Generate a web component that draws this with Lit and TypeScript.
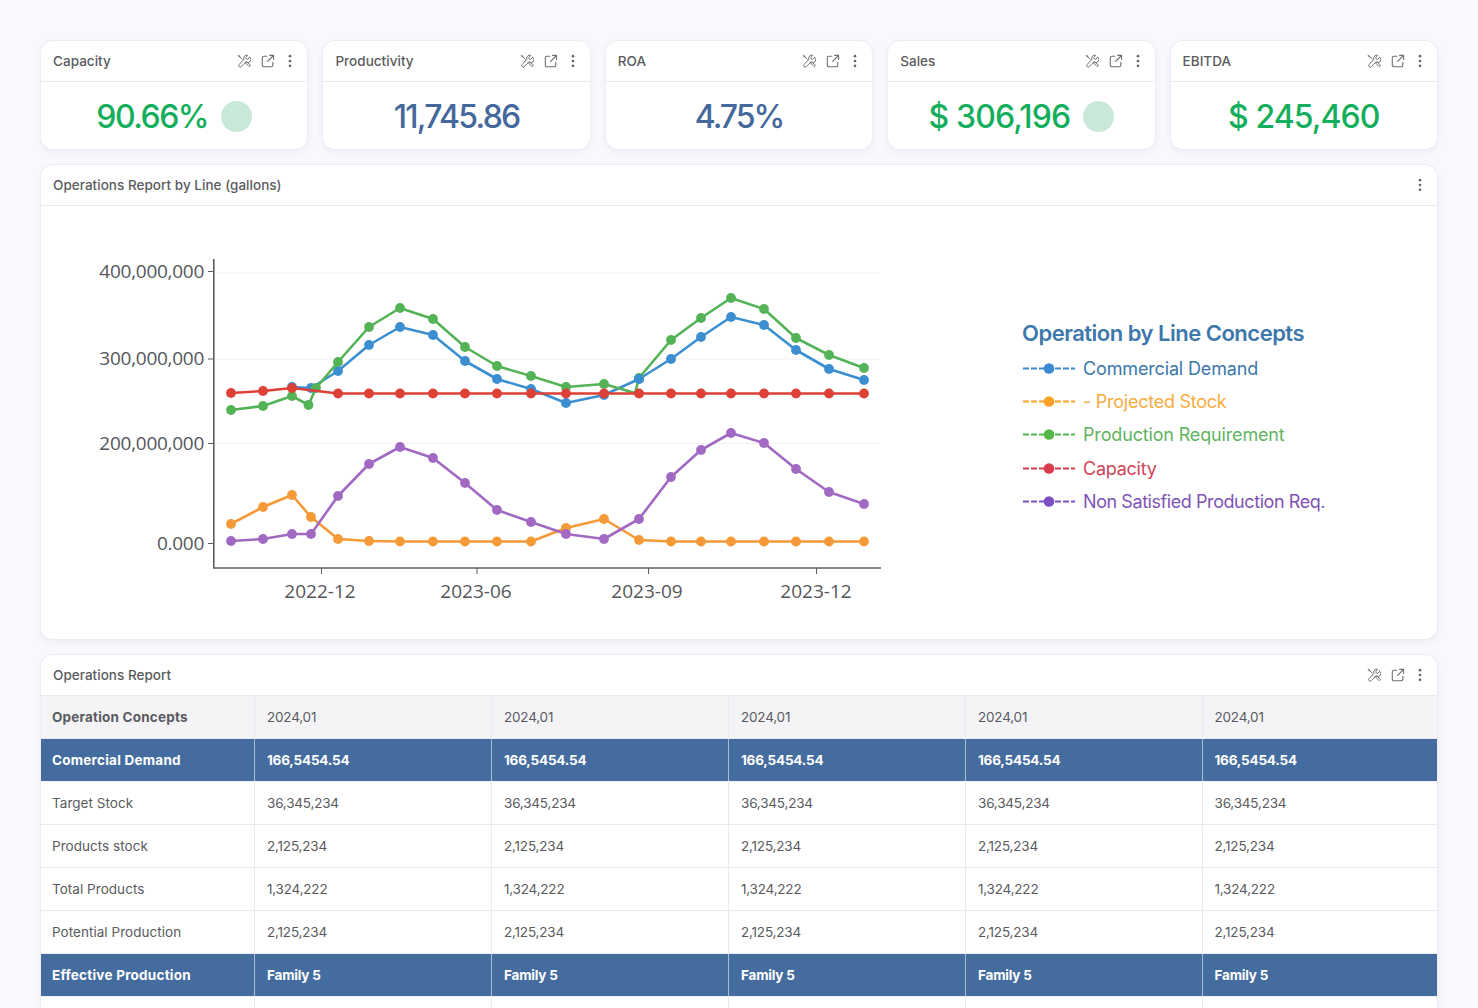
import { LitElement, html, css, svg } from "lit";
import { customElement } from "lit/decorators.js";

const wrench = html`<svg class="ic" viewBox="0 0 14 14" fill="none" stroke="currentColor" stroke-width="1" stroke-linejoin="round" stroke-linecap="round"><path d="M12.7 3.3l-2 2-1.5-.4-.4-1.5 2-2a3 3 0 0 0-3.9 3.9L2 10.7a1.5 1.5 0 0 0 2.1 2.1l4.8-4.8a3 3 0 0 0 3.8-4.7z"/><path d="M5.3 5.2 2.9 2.8 2.5 1.7 1.6 1.2l-.4.4.5.9 1.1.4"/><path d="m8.3 8.7 3.4 3.5a.9.9 0 0 0 1.3-1.3L9.7 7.5"/></svg>`;
const ext = html`<svg class="ic" viewBox="0 0 14 14" fill="none" stroke="currentColor" stroke-width="1.1" stroke-linecap="round" stroke-linejoin="round"><path d="M11.8 8.2v3a1.5 1.5 0 0 1-1.5 1.5H2.8a1.5 1.5 0 0 1-1.5-1.5V3.7a1.5 1.5 0 0 1 1.5-1.5h3"/><path d="M8.6 1.4h4v4M12.5 1.5 6.6 7.4"/></svg>`;
const dots = html`<svg class="ic more" viewBox="0 0 14 14" fill="#66676c"><circle cx="7" cy="2.2" r="1.35"/><circle cx="7" cy="7" r="1.35"/><circle cx="7" cy="11.8" r="1.35"/></svg>`;

const kpis = [
  { t: "Capacity", v: "90.66%", c: "g", dot: true, ls: -1.5 },
  { t: "Productivity", v: "11,745.86", c: "b", dot: false, ls: -1.72 },
  { t: "ROA", v: "4.75%", c: "b", dot: false, ls: -2 },
  { t: "Sales", v: "$ 306,196", c: "g", dot: true, ls: -0.85 },
  { t: "EBITDA", v: "$ 245,460", c: "g", dot: false, ls: -0.95 },
];

const XS = [231, 263, 292, 311, 338, 369, 400, 433, 465, 497, 531, 566, 604, 639, 671, 701, 731, 764, 796, 829, 864];
const zip = (ys: number[], from = 0) => ys.map((y, i) => [XS[i + from], y] as [number, number]);

const blue = "#3b8fd0";
const series: { c: string; pts: [number, number][]; hide?: number }[] = [
  { c: blue, pts: zip([387, 388, 371, 345, 327, 335, 361, 379, 389, 403, 395, 379, 359, 337, 317, 325, 350, 369, 380], 2) },
  {
    c: "#54b257",
    hide: 635,
    pts: [[231, 410], [263, 406], [292, 396], [308.5, 405], [316, 388], [338, 362], [369, 327], [400, 308], [433, 319], [465, 347], [497, 366], [531, 376], [566, 387], [604, 384], [635, 393], [639, 378], [671, 340], [701, 318], [731, 298], [764, 309], [796, 338], [829, 355], [864, 368]],
  },
  { c: blue, pts: [[639, 379]] },
  { c: "#f59a36", pts: zip([524, 507, 495, 517, 539, 541, 541.5, 541.5, 541.5, 541.5, 541.5, 528, 519, 540, 541.5, 541.5, 541.5, 541.5, 541.5, 541.5, 541.5]) },
  { c: "#a169c2", pts: zip([541, 539, 534, 534, 496, 464, 447, 458, 483, 510, 522, 534, 539, 519, 477, 450, 433, 443, 469, 492, 504]) },
  {
    c: "#dc4037",
    pts: [[231, 393], [263, 391], [292, 388], ...XS.slice(4).map((x) => [x, 393.5] as [number, number])],
  },
];

const legend = [
  ["#3a8ad4", "#3a78ad", "Commercial Demand", -0.15],
  ["#ffa126", "#f8ac3f", "- Projected Stock", -0.25],
  ["#53b848", "#5fb35f", "Production Requirement", -0.16],
  ["#d83c4e", "#cf4558", "Capacity", -0.25],
  ["#7e4fc4", "#7f52b5", "Non Satisfied Production Req.", -0.43],
] as const;

const cols = ["a", "b", "c", "d", "e"];
type Row = { l: string; v: string; k?: boolean };
const rows: Row[] = [
  { l: "Comercial Demand", v: "166,5454.54", k: true },
  { l: "Target Stock", v: "36,345,234" },
  { l: "Products stock", v: "2,125,234" },
  { l: "Total Products", v: "1,324,222" },
  { l: "Potential Production", v: "2,125,234" },
  { l: "Effective Production", v: "Family 5", k: true },
  { l: "", v: "" },
];

@customElement("chart-plot")
class ChartPlot extends LitElement {
  static styles = css`
    :host { display: block; }
    svg { display: block; }
    .t { font-family: "Open Sans", sans-serif; font-size: 19px; fill: #55565b; }
    .y { letter-spacing: -.27px; }
  `;
  render() {
    const ylabels: [string, number][] = [["400,000,000", 278], ["300,000,000", 365], ["200,000,000", 450], ["0.000", 550]];
    const xlabels: [string, number][] = [["2022-12", 320], ["2023-06", 476], ["2023-09", 647], ["2023-12", 816]];
    return html`<svg width="1396" height="433" viewBox="41 206 1396 433">
      ${[273, 359, 443.5].map((y) => svg`<line x1="214" x2="880" y1=${y} y2=${y} stroke="#f0f0f3" stroke-width="1"/>`)}
      ${[271.5, 359, 443.5, 543.5].map((y) => svg`<line x1="208" x2="214" y1=${y} y2=${y} stroke="#5d5e63" stroke-width="1"/>`)}
      ${[321.5, 477, 648.5, 816.5].map((x) => svg`<line x1=${x} x2=${x} y1="568" y2="574" stroke="#5d5e63" stroke-width="1"/>`)}
      <path d="M213.8 259V568H881" fill="none" stroke="#5d5e63" stroke-width="1.6"/>
      ${ylabels.map(([t, y]) => svg`<text class="t y" x="204" y=${y} text-anchor="end">${t}</text>`)}
      ${xlabels.map(([t, x]) => svg`<text class="t" x=${x} y="598" text-anchor="middle">${t}</text>`)}
      ${series.map((s) => svg`
        <polyline points=${s.pts.map((p) => p.join(",")).join(" ")} fill="none" stroke=${s.c} stroke-width="2.6" stroke-linejoin="round"/>
        ${s.pts.filter((p) => p[0] !== s.hide).map((p) => svg`<circle cx=${p[0]} cy=${p[1]} r="4.9" fill=${s.c}/>`)}
      `)}
    </svg>`;
  }
}

@customElement("app-root")
class AppRoot extends LitElement {
  static styles = css`
    :host { display: block; height: 1008px; overflow: hidden; background: #f8f8fd; font-family: "Inter", "Liberation Sans", sans-serif; color: #5a5b60; }
    .page { padding: 41px 41px 0; display: flex; flex-direction: column; gap: 16px; }
    .kpis { display: grid; grid-template-columns: repeat(5, 1fr); gap: 16px; }
    .card { background: #fff; border-radius: 12px; box-shadow: 0 0 0 1px #ededf3, 0 3px 8px rgba(40, 40, 90, .06); overflow: hidden; }
    .head { height: 40px; display: flex; align-items: center; padding: 0 10px 0 12px; border-bottom: 1px solid #e9e9ee; font-size: 13.5px; font-weight: 500; letter-spacing: .03px; }
    .head .title { flex: 1; }
    .icons { display: flex; align-items: center; gap: 10px; color: #6f7075; }
    .ic { width: 14px; height: 14px; display: block; }
    .more { margin-left: -2px; }
    .kval { height: 65px; padding-top: 2px; display: flex; align-items: center; justify-content: center; gap: 13px; font-size: 32px; font-weight: 500; }
    .g { color: #14ae5c; }
    .b { color: #44689c; }
    .dot { width: 31px; height: 31px; border-radius: 50%; background: #c8e9d8; }
    .chart { position: relative; height: 433px; }
    .legend { position: absolute; left: 981px; top: 114px; }
    .ltitle { font-size: 22px; font-weight: 600; color: #3d78ab; letter-spacing: -.5px; line-height: 26px; margin-bottom: 6px; }
    .li { display: flex; align-items: center; gap: 7px; height: 33.2px; font-size: 18px; }
    .li svg { width: 54px; height: 11px; display: block; flex: none; }
    table { width: 100%; border-collapse: collapse; table-layout: fixed; font-size: 13.5px; }
    col.first { width: 213.5px; }
    col.wide { width: 237px; }
    col.mid { width: 236.5px; }
    td, th { height: 43px; padding: 0 12px; text-align: left; box-sizing: border-box; border: 1px solid #e9e9f0; font-weight: 400; letter-spacing: -.2px; }
    th { height: 42px; }
    tr > :first-child { border-left: none; padding-left: 11px; letter-spacing: .04px; }
    tr > :last-child { border-right: none; }
    tr:first-child > * { border-top: none; }
    thead th { background: #f4f4f7; }
    thead th.first { font-weight: 700; letter-spacing: .2px; }
    tr.k td { background: #456c9e; color: #fff; font-weight: 700; border-top-color: #f0f2f8; border-bottom-color: #f0f2f8; border-left-color: #a9bcd3; border-right-color: #a9bcd3; }
    tr.k td:first-child { letter-spacing: .24px; }
  `;

  head(title: string, tools = true) {
    return html`<div class="head"><span class="title">${title}</span><span class="icons">${tools ? html`${wrench}${ext}` : ""}${dots}</span></div>`;
  }

  render() {
    return html`<div class="page">
      <div class="kpis">
        ${kpis.map((k) => html`<div class="card">${this.head(k.t)}<div class="kval ${k.c}"><span style="letter-spacing:${k.ls}px">${k.v}</span>${k.dot ? html`<span class="dot"></span>` : ""}</div></div>`)}
      </div>
      <div class="card">
        ${this.head("Operations Report by Line (gallons)", false)}
        <div class="chart">
          <chart-plot></chart-plot>
          <div class="legend">
            <div class="ltitle">Operation by Line Concepts</div>
            ${legend.map(([mc, tc, t, ls]) => html`<div class="li" style="color:${tc};letter-spacing:${ls}px">
              <svg viewBox="0 0 54 11"><line x1="1" x2="53" y1="5.5" y2="5.5" stroke=${mc} stroke-width="2.2" stroke-dasharray="6 2"/><circle cx="27" cy="5.5" r="5.3" fill=${mc}/></svg><span>${t}</span></div>`)}
          </div>
        </div>
      </div>
      <div class="card">
        ${this.head("Operations Report")}
        <table>
          <colgroup><col class="first"/><col class="wide"/><col class="wide"/><col class="wide"/><col class="mid"/><col/></colgroup>
          <thead><tr><th class="first">Operation Concepts</th>${cols.map(() => html`<th>2024,01</th>`)}</tr></thead>
          <tbody>
            ${rows.map((r) => html`<tr class=${r.k ? "k" : ""}><td>${r.l}</td>${cols.map(() => html`<td>${r.v}</td>`)}</tr>`)}
          </tbody>
        </table>
      </div>
    </div>`;
  }
}
